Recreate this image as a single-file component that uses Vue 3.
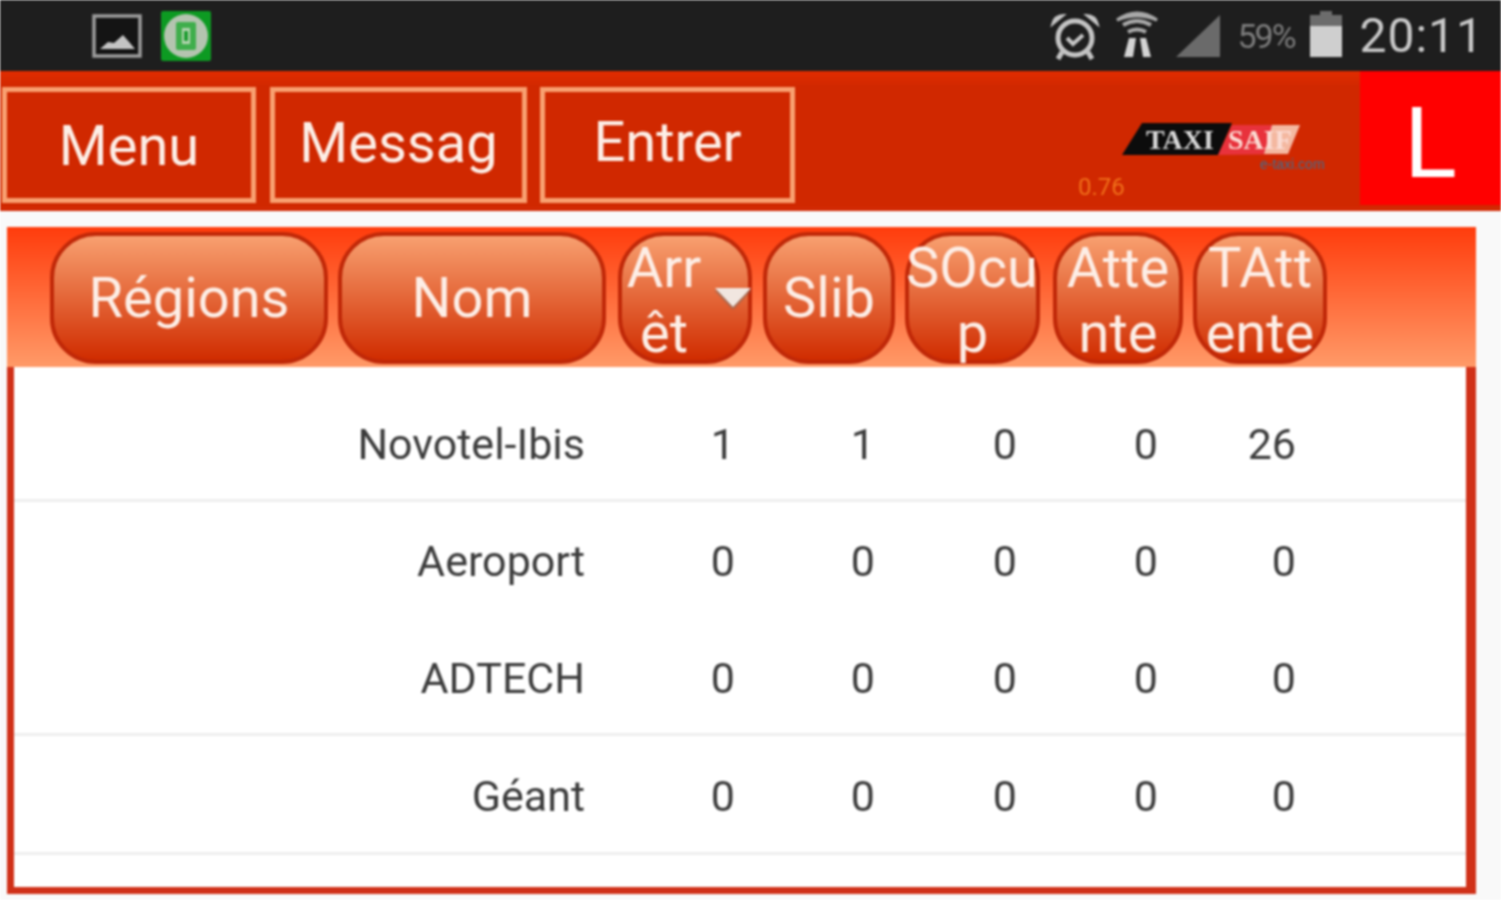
<script setup>
const tabs = [
  { label: 'Menu', cls: 'menu' },
  { label: 'Messag', cls: 'msg' },
  { label: 'Entrer', cls: 'ent' }
]

const columns = [
  { label: 'Régions', cls: 'c-reg' },
  { label: 'Nom', cls: 'c-nom' },
  { label: 'Arr\nêt', cls: 'c-arr', sorted: true },
  { label: 'Slib', cls: 'c-slib' },
  { label: 'SOcu\np', cls: 'c-socu' },
  { label: 'Atte\nnte', cls: 'c-att' },
  { label: 'TAtt\nente', cls: 'c-tatt' }
]

const rows = [
  { name: 'Novotel-Ibis', vals: [1, 1, 0, 0, 26], line: true },
  { name: 'Aeroport', vals: [0, 0, 0, 0, 0], line: false },
  { name: 'ADTECH', vals: [0, 0, 0, 0, 0], line: true },
  { name: 'Géant', vals: [0, 0, 0, 0, 0], line: true }
]
</script>

<template>
  <div class="screen">
    <div class="status">
      <div class="status-left">
        <svg class="ic-pic" viewBox="0 0 50 44">
          <rect x="2" y="2" width="46" height="40" fill="#141414" stroke="#9c9c9c" stroke-width="3.5" />
          <path d="M8 35 L16 28 L22 29 L31 21 L38 29 L43 35 Z" fill="#c4c4c4" />
        </svg>
        <svg class="ic-app" viewBox="0 0 50 50">
          <rect width="50" height="50" rx="2" fill="#0d9a22" />
          <circle cx="25" cy="25" r="22" fill="#b4c4b0" />
          <rect x="15" y="11" width="20" height="28" rx="2" fill="#3fae4c" />
          <rect x="21" y="17" width="8" height="16" fill="#b4d4b0" />
          <rect x="23" y="20" width="4" height="10" fill="#1c9c30" />
        </svg>
      </div>
      <div class="status-right">
        <svg class="ic-alarm" viewBox="0 0 50 50" fill="none" stroke="#c4c4c4">
          <circle cx="25" cy="27" r="17" stroke-width="5" />
          <path d="M17 27 L23 33 L33 24" stroke-width="4" />
          <path d="M2 14 Q4 4 14 4 Z M48 14 Q46 4 36 4 Z" fill="#c4c4c4" stroke-width="2" />
          <path d="M12 41 L8 48 M38 41 L42 48" stroke-width="5" />
        </svg>
        <svg class="ic-wifi" viewBox="0 0 42 50" fill="none" stroke="#a8a8a8">
          <path d="M1 12 Q21 -2 41 12 Q21 4 1 12 Z" fill="#a8a8a8" stroke-width="3" />
          <path d="M7 17 Q21 9 35 17" stroke-width="4" />
          <path d="M12 24 Q21 19 30 24" stroke-width="4" />
          <path d="M13 30 L8 49 L17 49 L20 30 Z M24 30 L27 49 L35 49 L30 30 Z" fill="#d4d4d4" stroke="none" />
        </svg>
        <svg class="ic-signal" viewBox="0 0 44 42">
          <path d="M0 42 L44 0 L44 42 Z" fill="#6a6a6a" />
        </svg>
        <span class="pct">59%</span>
        <svg class="ic-batt" viewBox="0 0 32 46">
          <path d="M10 0 H22 V4 H32 V15 H0 V4 H10 Z" fill="#6c6c6c" />
          <rect y="15" width="32" height="31" fill="#cfcfcf" />
        </svg>
        <span class="clock">20:11</span>
      </div>
    </div>

    <div class="topbar">
      <div class="tabs">
        <a v-for="t in tabs" :key="t.label" class="tab" :class="t.cls">{{ t.label }}</a>
      </div>
      <div class="logo">
        <svg viewBox="0 0 210 70" width="210" height="70">
          <polygon points="20,2 110,2 96,34 0,34" fill="#0c0c0c" />
          <polygon points="110,4 178,4 166,33 96,34" fill="#e8323c" />
          <polygon points="150,4 178,4 166,33 142,33" fill="#f4b8a0" />
          <text x="24" y="28" class="logo-a">TAXI</text>
          <text x="106" y="28" class="logo-b">SAIF</text>
          <text x="138" y="48" class="logo-c">e-taxi.com</text>
        </svg>
        <span class="version">0.76</span>
      </div>
      <div class="user">L</div>
    </div>

    <div class="panel">
      <div class="thead">
        <button v-for="c in columns" :key="c.cls" class="th" :class="c.cls">
          {{ c.label }}
          <span v-if="c.sorted" class="sort"></span>
        </button>
      </div>
      <div class="tbody">
        <div v-for="r in rows" :key="r.name" class="row" :class="{ line: r.line }">
          <span>{{ r.name }}</span>
          <span v-for="(v, i) in r.vals" :key="i">{{ v }}</span>
        </div>
      </div>
    </div>
  </div>
</template>

<style scoped>
.screen {
  width: 1501px;
  height: 900px;
  overflow: hidden;
  background: #f9f9f9;
  font-family: Roboto, "Liberation Sans", sans-serif;
  filter: blur(1px);
}

.status {
  height: 71px;
  background: #1e1e1e;
  display: flex;
  align-items: center;
  justify-content: space-between;
}
.status-left {
  display: flex;
  align-items: center;
  gap: 19px;
  margin-left: 92px;
}
.status-right {
  display: flex;
  align-items: center;
  margin-right: 17px;
}
.ic-pic { width: 50px; height: 44px; }
.ic-app { width: 50px; height: 50px; }
.ic-alarm { width: 50px; height: 50px; margin-right: 16px; }
.ic-wifi { width: 42px; height: 50px; margin-right: 18px; margin-top: -6px; }
.ic-signal { width: 44px; height: 42px; margin-right: 17px; }
.pct {
  font-size: 34px;
  letter-spacing: -2px;
  color: #7c7c7c;
  width: 73px;
}
.ic-batt { width: 32px; height: 46px; margin-right: 17px; margin-top: -4px; }
.clock {
  font-size: 48px;
  color: #c9c9c9;
  letter-spacing: 1px;
}

.topbar {
  height: 140px;
  box-sizing: border-box;
  background: linear-gradient(#e22c00 0, #d02800 16px);
  display: flex;
  align-items: flex-start;
  border-bottom: 4px solid #d22a04;
}
.tabs {
  display: flex;
  padding-top: 16px;
  padding-left: 2px;
}
.tab {
  box-sizing: border-box;
  height: 116px;
  border: 5px solid #f8a070;
  color: #fdeee6;
  font-size: 56px;
  display: flex;
  align-items: center;
  justify-content: center;
}
.menu { width: 254px; margin-right: 14px; padding-top: 2px; }
.msg { width: 257px; margin-right: 13px; padding-bottom: 4px; }
.ent { width: 255px; padding-bottom: 6px; }

.logo {
  position: relative;
  width: 565px;
  height: 130px;
}
.logo svg {
  position: absolute;
  left: 327px;
  top: 50px;
}
.logo-a {
  font-family: "Liberation Serif", serif;
  font-size: 28px;
  font-weight: bold;
  fill: #d8d8d8;
}
.logo-b {
  font-family: "Liberation Serif", serif;
  font-size: 28px;
  font-weight: bold;
  fill: #fbdcd4;
}
.logo-c {
  font-family: "Liberation Sans", sans-serif;
  font-size: 14px;
  fill: #3a6f92;
}
.version {
  position: absolute;
  left: 283px;
  top: 102px;
  font-size: 24px;
  color: #f0701a;
}
.user {
  box-sizing: border-box;
  width: 141px;
  height: 134px;
  padding-top: 10px;
  background: #ff0000;
  color: #fff;
  font-size: 98px;
  display: flex;
  align-items: center;
  justify-content: center;
}

.panel {
  margin: 16px 25px 0 7px;
}
.thead {
  box-sizing: border-box;
  height: 140px;
  background: linear-gradient(#ff3c0c, #ff9a68);
  display: flex;
  align-items: flex-start;
  padding: 5px 0 0 43px;
}
.th {
  position: relative;
  box-sizing: border-box;
  height: 132px;
  padding: 0;
  border: 4px solid #c02808;
  border-radius: 46px;
  background: linear-gradient(#f8a070, #d02c00);
  color: #fdeee6;
  font-family: inherit;
  font-size: 56px;
  line-height: 65px;
  white-space: pre-line;
  overflow: visible;
}
.c-reg { width: 278px; margin-right: 10px; }
.c-nom { width: 268px; margin-right: 12px; }
.c-arr { width: 134px; margin-right: 11px; padding-right: 42px; }
.c-slib { width: 132px; margin-right: 10px; }
.c-socu { width: 135px; margin-right: 13px; text-indent: -3px; }
.c-att { width: 130px; margin-right: 10px; }
.c-tatt { width: 134px; }
.sort {
  position: absolute;
  right: -3px;
  top: 52px;
  width: 0;
  height: 0;
  border-left: 18px solid transparent;
  border-right: 18px solid transparent;
  border-top: 19px solid #f1e6e0;
  filter: drop-shadow(0 2px 1px #8a6a5c);
}

.tbody {
  box-sizing: border-box;
  height: 527px;
  background: #fff;
  border: solid #d03018;
  border-width: 0 10px 7px 7px;
  padding-top: 18px;
}
.row {
  box-sizing: border-box;
  height: 117px;
  padding-top: 4px;
  display: grid;
  grid-template-columns: 571px 150px 140px 142px 141px 138px;
  align-items: center;
  justify-items: end;
  color: #3c3c3c;
  font-size: 43px;
  border-bottom: 3px solid transparent;
}
.row:last-child { height: 119px; }
.row.line { border-bottom-color: #eeeeee; }
</style>
